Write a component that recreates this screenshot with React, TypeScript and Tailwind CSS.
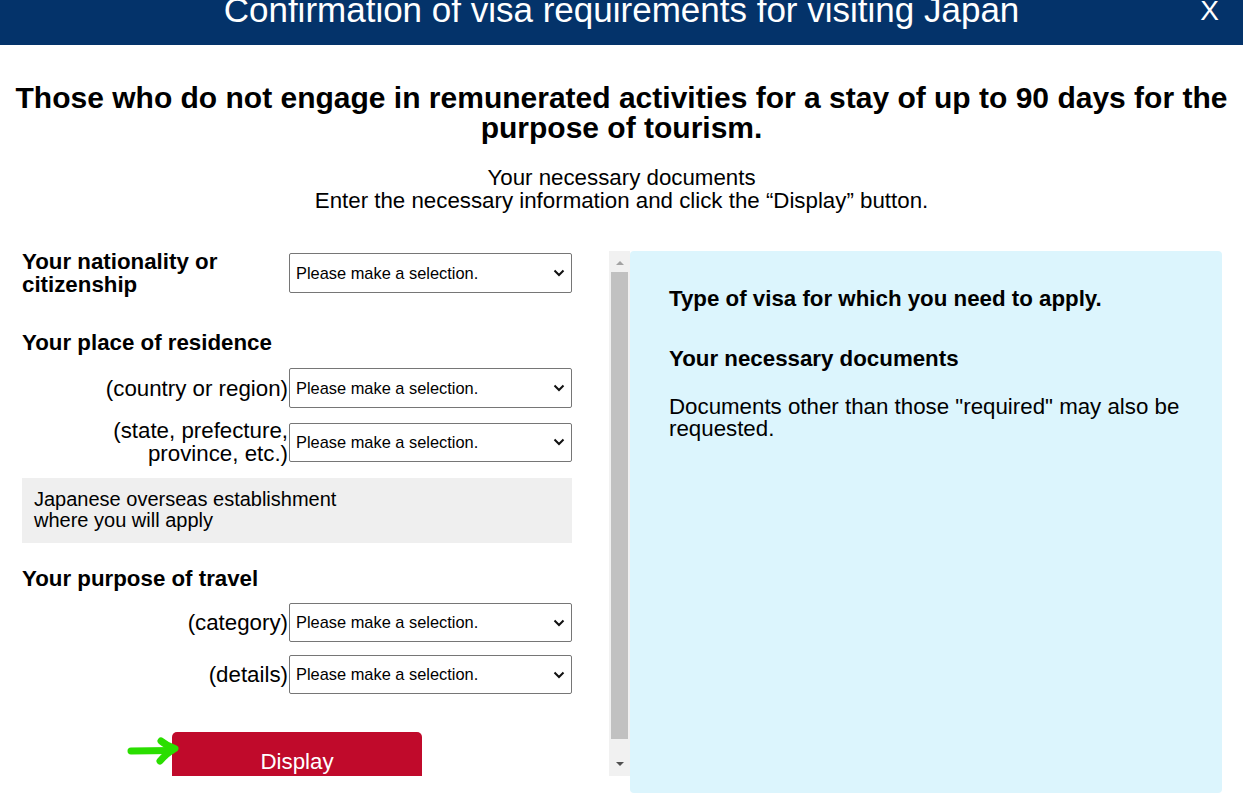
import React from "react";

const font = { fontFamily: '"Liberation Sans", Arial, Helvetica, sans-serif' };

function Chevron() {
  return (
    <svg width="12" height="8" viewBox="0 0 12 8" className="shrink-0">
      <path d="M1.5 1.5 L6 6 L10.5 1.5" fill="none" stroke="#111" strokeWidth="2" />
    </svg>
  );
}

function FakeSelect({ h }: { h: string }) {
  return (
    <div
      className={`flex w-[283px] shrink-0 items-center justify-between rounded-[2px] border border-[#767676] bg-white pl-[6px] pr-[6px] text-[16.4px] leading-none text-black ${h}`}
    >
      <span>Please make a selection.</span>
      <Chevron />
    </div>
  );
}

export default function App() {
  return (
    <div className="min-h-[800px] w-[1243px] bg-white text-black" style={font}>
      {/* Header */}
      <div className="grid h-[45px] grid-cols-[1fr_auto_1fr] overflow-hidden bg-[#04336a] text-white">
        <div />
        <div className="mt-[-8px] whitespace-nowrap text-[35px] leading-[35px]">
          Confirmation of visa requirements for visiting Japan
        </div>
        <div className="flex justify-end pr-[24px]">
          <div className="mt-[-7px] text-[28px] leading-[35px]">X</div>
        </div>
      </div>

      {/* Title */}
      <h1 className="mt-[38px] px-[8px] text-center text-[30px] font-bold leading-[30px]">
        Those who do not engage in remunerated activities for a stay of up to 90 days for the purpose of tourism.
      </h1>

      <div className="mt-[23px] text-center text-[22.3px] leading-[23px]">
        <div>Your necessary documents</div>
        <div>Enter the necessary information and click the “Display” button.</div>
      </div>

      {/* Main row */}
      <div className="mt-[39px] flex pl-[22px]">
        {/* Left scroll area */}
        <div className="flex h-[525px] w-[608px]">
          <div className="h-[525px] w-[587px] overflow-hidden">
            <div className="w-[550px]">
              {/* Nationality */}
              <div className="flex h-[44px] items-center">
                <div className="w-[267px] text-[22.3px] font-bold leading-[23px]">
                  Your nationality or
                  <br />
                  citizenship
                </div>
                <FakeSelect h="h-[40px]" />
              </div>

              {/* Residence */}
              <div className="mt-[36px] text-[22.3px] font-bold leading-[23px]">Your place of residence</div>
              <div className="mt-[14px] flex items-center">
                <div className="w-[267px] pr-px text-right text-[22.3px] leading-[23px]">(country or region)</div>
                <FakeSelect h="h-[40px]" />
              </div>
              <div className="mt-[11px] flex items-center">
                <div className="w-[267px] pr-px text-right text-[22.3px] leading-[23px]">
                  (state, prefecture,
                  <br />
                  province, etc.)
                </div>
                <FakeSelect h="h-[39px]" />
              </div>

              <div className="mt-[13px] h-[65px] bg-[#efefef] px-[12px] pt-[11px] text-[20px] leading-[21px]">
                Japanese overseas establishment
                <br />
                where you will apply
              </div>

              {/* Purpose */}
              <div className="mt-[24px] text-[22.3px] font-bold leading-[23px]">Your purpose of travel</div>
              <div className="mt-[13px] flex items-center">
                <div className="w-[267px] pr-px text-right text-[22.3px] leading-[23px]">(category)</div>
                <FakeSelect h="h-[39px]" />
              </div>
              <div className="mt-[13px] flex items-center">
                <div className="w-[267px] pr-px text-right text-[22.3px] leading-[23px]">(details)</div>
                <FakeSelect h="h-[39px]" />
              </div>

              {/* Button row */}
              <div className="mt-[38px] flex items-start pl-[105px]">
                <svg width="54" height="28" viewBox="0 0 54 28" className="relative z-10 mt-[5px] -mr-[9px] shrink-0">
                  <path d="M4 14 L44 13.5" fill="none" stroke="#2ade00" strokeWidth="7" strokeLinecap="round" />
                  <path
                    d="M34 4 Q40 9 48 11.5 Q40 16 33 24"
                    fill="none"
                    stroke="#2ade00"
                    strokeWidth="7"
                    strokeLinecap="round"
                    strokeLinejoin="round"
                  />
                </svg>
                <div className="flex h-[60px] w-[250px] shrink-0 items-center justify-center rounded-[5px] bg-[#c00a2b] text-[22.3px] text-white">
                  Display
                </div>
              </div>
            </div>
          </div>

          {/* Scrollbar */}
          <div className="flex h-[525px] w-[21px] flex-col bg-[#f1f1f1]">
            <div className="flex h-[21px] items-center justify-center pt-[2px]">
              <div className="h-0 w-0 border-x-[4px] border-b-[4px] border-x-transparent border-b-[#a3a3a3]" />
            </div>
            <div className="mx-[2px] h-[467px] bg-[#c1c1c1]" />
            <div className="flex-1" />
            <div className="flex h-[21px] items-center justify-center pb-[4px]">
              <div className="h-0 w-0 border-x-[4px] border-t-[4px] border-x-transparent border-t-[#505050]" />
            </div>
          </div>
        </div>

        {/* Right panel */}
        <div className="h-[542px] w-[592px] rounded-[4px] bg-[#dcf5fd] pl-[39px] pt-[36px]">
          <div className="text-[22.3px] font-bold leading-[23px]">Type of visa for which you need to apply.</div>
          <div className="mt-[37px] text-[22.3px] font-bold leading-[23px]">Your necessary documents</div>
          <div className="mt-[26px] w-[530px] text-[22.3px] leading-[22px]">
            Documents other than those "required" may also be requested.
          </div>
        </div>
      </div>
    </div>
  );
}
